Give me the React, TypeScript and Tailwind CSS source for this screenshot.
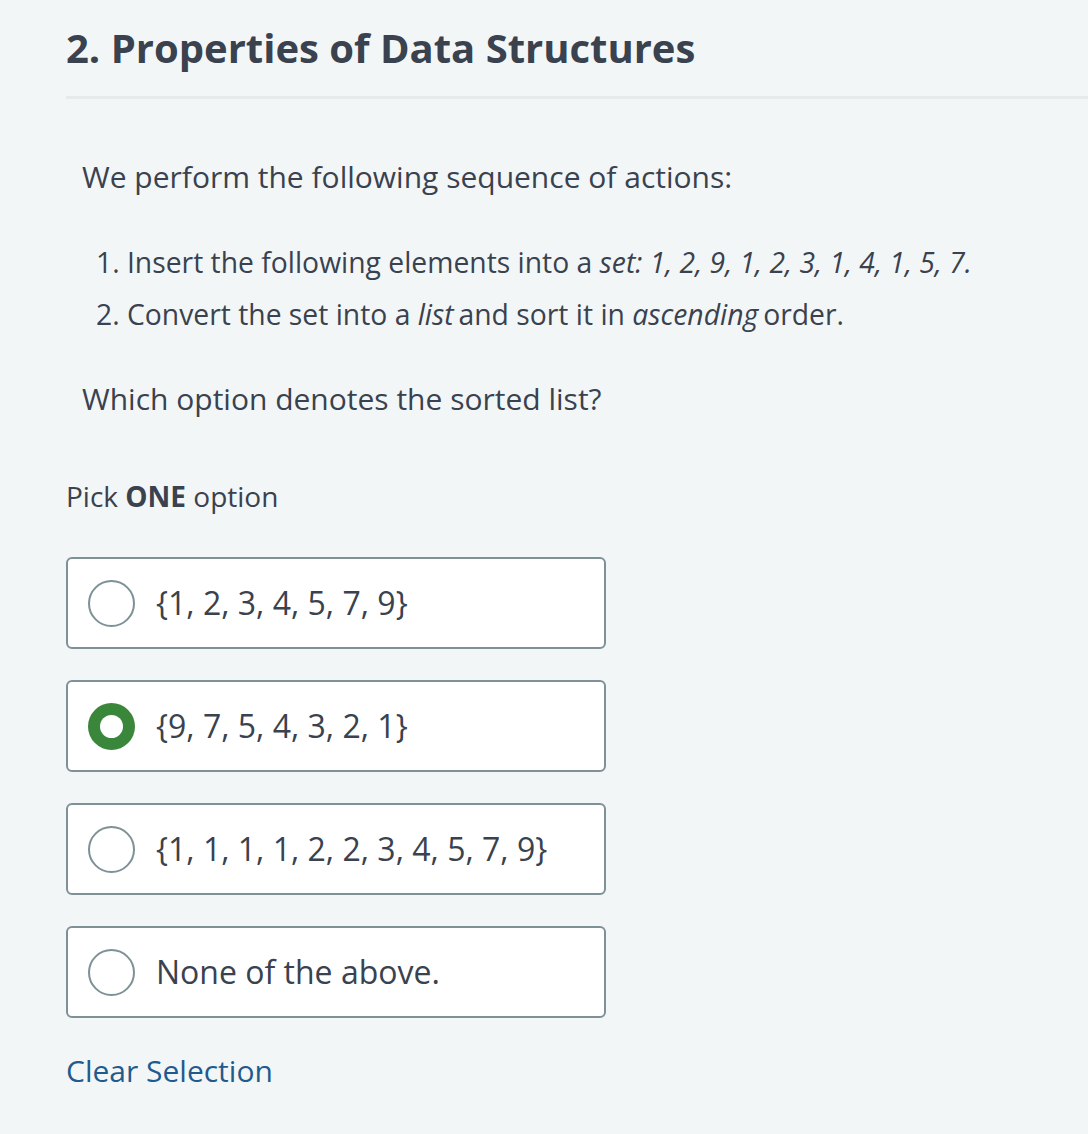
const options = [
  { label: '{1, 2, 3, 4, 5, 7, 9}', selected: false },
  { label: '{9, 7, 5, 4, 3, 2, 1}', selected: true },
  { label: '{1, 1, 1, 1, 2, 2, 3, 4, 5, 7, 9}', selected: false },
  { label: 'None of the above.', selected: false },
]

function Radio({ selected }: { selected: boolean }) {
  return selected ? (
    <span className="h-[47px] w-[47px] shrink-0 rounded-full bg-[#3a873c] flex items-center justify-center">
      <span className="h-[23px] w-[23px] rounded-full bg-white" />
    </span>
  ) : (
    <span className="h-[47px] w-[47px] shrink-0 rounded-full border-2 border-[#7d9196] bg-white" />
  )
}

export default function App() {
  return (
    <div
      className="min-h-screen bg-[#f3f6f7] pl-[66px] pt-[23px] text-[#39424e]"
      style={{ fontFamily: '"Open Sans", "Noto Sans", sans-serif' }}
    >
      <h1 className="text-[40px] leading-[50px] font-bold">
        2. Properties of Data Structures
      </h1>
      <div className="mt-[23px] h-[3px] bg-[#e6eaeb]" />

      <div className="pl-4 mt-[58px]">
        <p className="text-[30px] leading-[40px]">
          We perform the following sequence of actions:
        </p>
        <ol className="mt-[39px] pl-[14px] text-[28.3px] leading-[52px]">
          <li>
            1. Insert the following elements into a{' '}
            <em>set: 1, 2, 9, 1, 2, 3, 1, 4, 1, 5, 7.</em>
          </li>
          <li>
            2. Convert the set into a <em>list</em>
            <span className="ml-[5px]">and sort it in </span>
            <em>ascending</em>
            <span className="ml-[5px]">order.</span>
          </li>
        </ol>
        <p className="mt-[39px] text-[30px] leading-[40px]">
          Which option denotes the sorted list?
        </p>
      </div>

      <p className="mt-[57px] text-[28px] leading-[40px]">
        Pick <span className="font-bold">ONE</span> option
      </p>

      <div className="mt-[41px] flex flex-col gap-[31px] w-[540px]">
        {options.map((o) => (
          <div
            key={o.label}
            className="h-[92px] rounded-[6px] border-2 border-[#7d9196] bg-white flex items-center pl-[20px] gap-[21px]"
          >
            <Radio selected={o.selected} />
            <span className="text-[32px] leading-[40px]">{o.label}</span>
          </div>
        ))}
      </div>

      <p className="mt-[33px] pb-10 text-[30px] leading-[40px] text-[#1f5b8e]">
        Clear Selection
      </p>
    </div>
  )
}
